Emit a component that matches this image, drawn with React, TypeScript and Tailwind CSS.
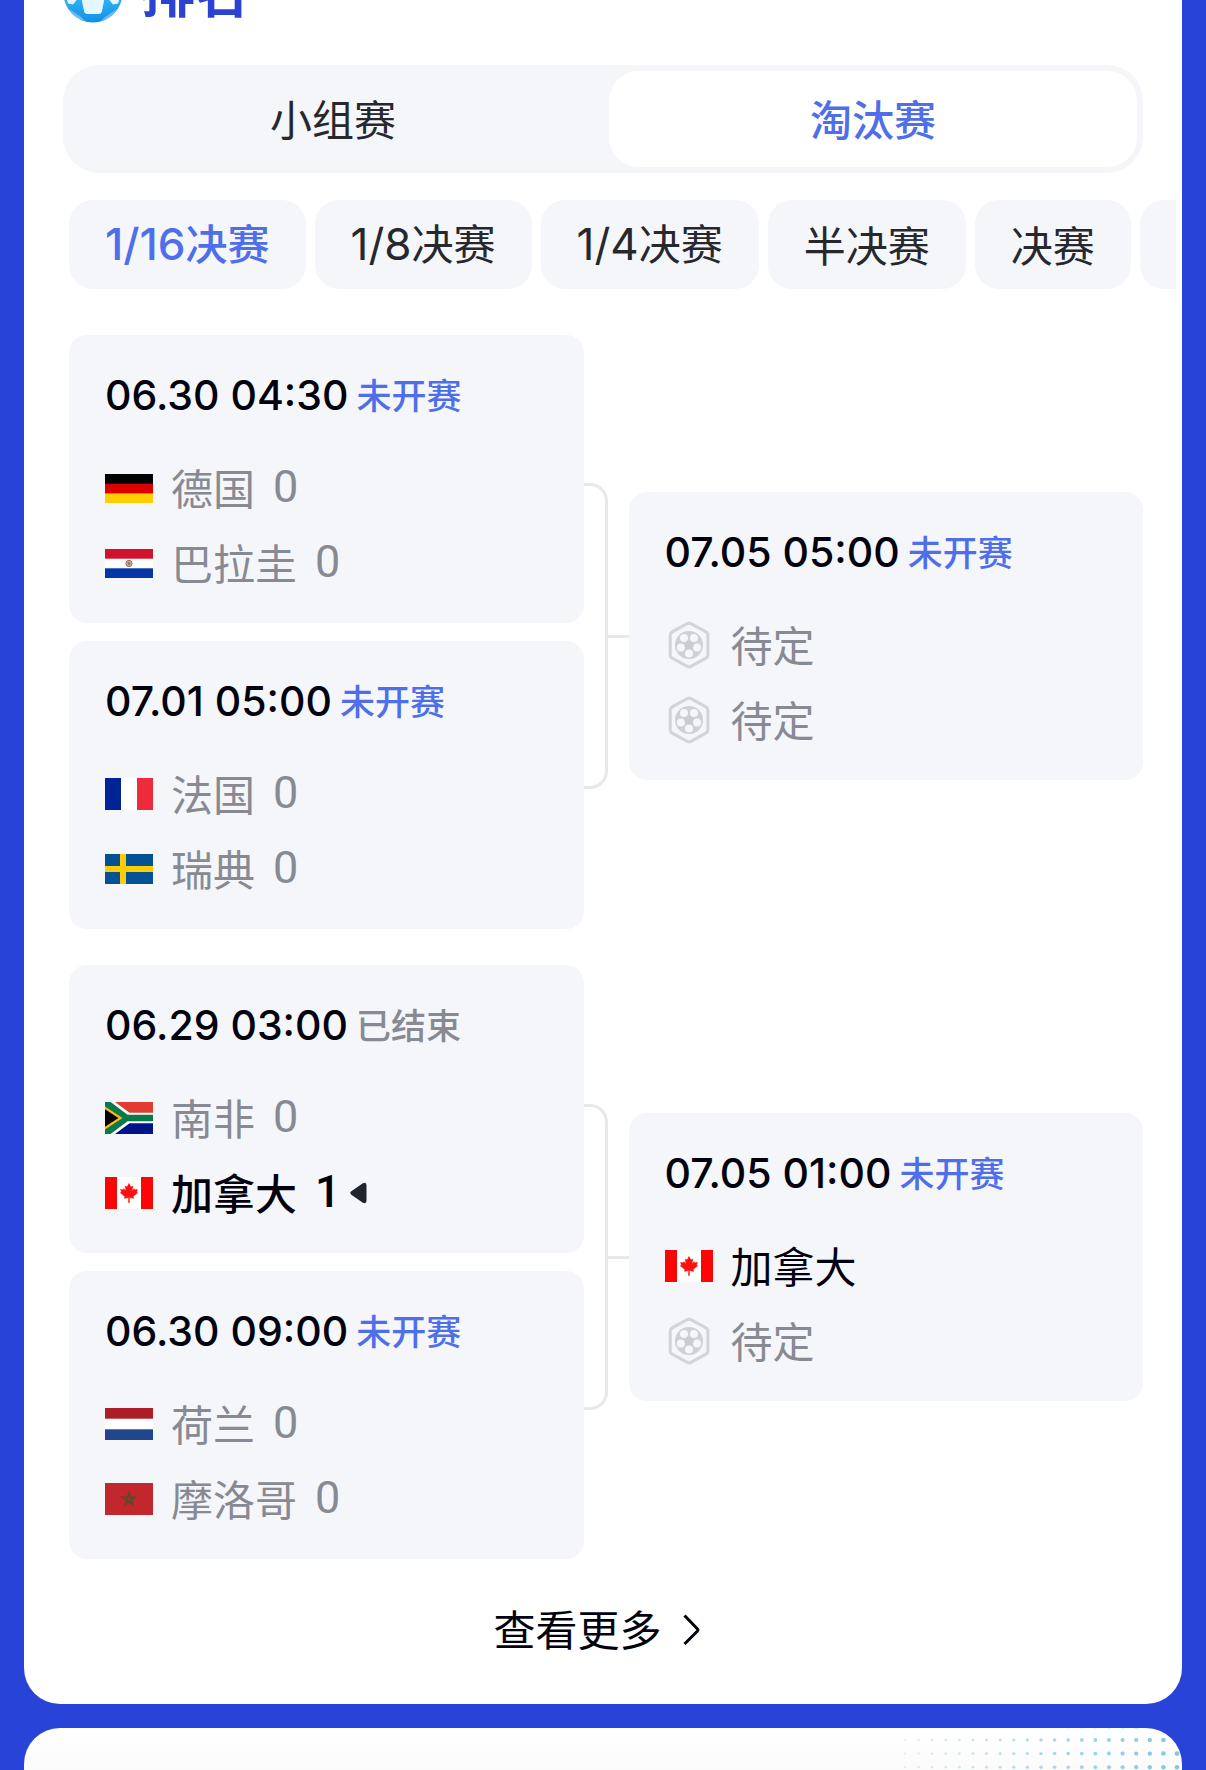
import { useState } from 'react'
import type { ReactNode } from 'react'

type TeamCode = 'de' | 'py' | 'fr' | 'se' | 'za' | 'ca' | 'nl' | 'ma' | 'tbd'

interface Team {
  code: TeamCode
  name: string
  score?: number
  winner?: boolean
  confirmed?: boolean
}

interface Match {
  time: string
  finished?: boolean
  teams: Team[]
}

const stages = ['小组赛', '淘汰赛']
const rounds = [
  { fraction: '1/16', name: '决赛' },
  { fraction: '1/8', name: '决赛' },
  { fraction: '1/4', name: '决赛' },
  { fraction: '', name: '半决赛' },
  { fraction: '', name: '决赛' },
]

const firstRound: Match[][] = [
  [
    {
      time: '06.30 04:30',
      teams: [
        { code: 'de', name: '德国', score: 0 },
        { code: 'py', name: '巴拉圭', score: 0 },
      ],
    },
    {
      time: '07.01 05:00',
      teams: [
        { code: 'fr', name: '法国', score: 0 },
        { code: 'se', name: '瑞典', score: 0 },
      ],
    },
  ],
  [
    {
      time: '06.29 03:00',
      finished: true,
      teams: [
        { code: 'za', name: '南非', score: 0 },
        { code: 'ca', name: '加拿大', score: 1, winner: true },
      ],
    },
    {
      time: '06.30 09:00',
      teams: [
        { code: 'nl', name: '荷兰', score: 0 },
        { code: 'ma', name: '摩洛哥', score: 0 },
      ],
    },
  ],
]

const secondRound: Match[] = [
  {
    time: '07.05 05:00',
    teams: [
      { code: 'tbd', name: '待定' },
      { code: 'tbd', name: '待定' },
    ],
  },
  {
    time: '07.05 01:00',
    teams: [
      { code: 'ca', name: '加拿大', confirmed: true },
      { code: 'tbd', name: '待定' },
    ],
  },
]

const flagHeights: Record<TeamCode, number> = {
  de: 29,
  py: 29,
  fr: 32,
  se: 30,
  za: 32,
  ca: 32,
  nl: 32,
  ma: 32,
  tbd: 48,
}

const flagShapes: Record<TeamCode, ReactNode> = {
  de: (
    <>
      <rect width="48" height="29" fill="#ffce05" />
      <rect width="48" height="19.4" fill="#dd0000" />
      <rect width="48" height="9.7" fill="#000" />
    </>
  ),
  py: (
    <>
      <rect width="48" height="29" fill="#fff" />
      <rect width="48" height="9.7" fill="#d0122d" />
      <rect y="19.3" width="48" height="9.7" fill="#0437a5" />
      <circle cx="24" cy="14.5" r="3.1" fill="#c9b2a4" stroke="#a3685c" strokeWidth="1" />
      <circle cx="24" cy="14.5" r="1.3" fill="#6c8064" />
    </>
  ),
  fr: (
    <>
      <rect width="48" height="32" fill="#fff" />
      <rect width="16" height="32" fill="#002395" />
      <rect x="32" width="16" height="32" fill="#ed2b3a" />
    </>
  ),
  se: (
    <>
      <rect width="48" height="30" fill="#055195" />
      <path d="M15 0h6v30h-6zM0 12h48v6H0z" fill="#fecc02" />
    </>
  ),
  za: (
    <>
      <rect width="48" height="16" fill="#e03c31" />
      <rect y="16" width="48" height="16" fill="#001489" />
      <path d="M0 0h10l14.5 10.7H48v10.6H24.5L10 32H0z" fill="#fff" />
      <path d="M0 0h5.6l17 12.8H48v6.4H22.6L5.6 32H0z" fill="#0a7a4a" />
      <path d="M0 4.5 17.5 16 0 27.5z" fill="#ffb81c" />
      <path d="M0 7.2 13.5 16 0 24.8z" fill="#000" />
    </>
  ),
  ca: (
    <>
      <rect width="48" height="32" fill="#fff" />
      <path d="M0 0h12v32H0zM36 0h12v32H36z" fill="#fb0505" />
      <path
        d="M24 6.500l-1.900 3.600-1.900-1 .9 5-2.300-2.400-.5 1.300-2.700-.5.9 2.700-1.200.6 4.700 3.800-.6 1.700 4.300-.7-.1 5h.8l-.1-5 4.300.7-.6-1.700 4.700-3.800-1.200-.6.9-2.700-2.700.5-.5-1.300-2.300 2.400.9-5-1.900 1z"
        fill="#fb1010"
        stroke="#fb1010"
        strokeWidth=".6"
      />
    </>
  ),
  nl: (
    <>
      <rect width="48" height="32" fill="#fff" />
      <rect width="48" height="10.7" fill="#ae1c28" />
      <rect y="21.3" width="48" height="10.7" fill="#21468b" />
    </>
  ),
  ma: (
    <>
      <rect width="48" height="32" fill="#c1272d" />
      <path
        d="M24 9.800l3.800 11.500-9.900-7.100h12.200l-9.900 7.100z"
        fill="none"
        stroke="#5d4a2c"
        strokeWidth="1.6"
      />
    </>
  ),
  tbd: (
    <>
      <path
        d="M22.200 2.600a4 4 0 0 1 3.700 0l15 8.300a4 4 0 0 1 2 3.500v19.200a4 4 0 0 1-2 3.500l-15 8.300a4 4 0 0 1-3.700 0l-15-8.300a4 4 0 0 1-2-3.500V14.400a4 4 0 0 1 2-3.500z"
        fill="none"
        stroke="#d3d4d7"
        strokeWidth="3"
      />
      <circle cx="24" cy="24" r="14" fill="#cfd0d3" />
      <g fill="#f4f6fa">
        <circle cx="24" cy="32.500" r="4" />
        <circle cx="15.900" cy="26.600" r="4" />
        <circle cx="19" cy="17.100" r="4" />
        <circle cx="29" cy="17.100" r="4" />
        <circle cx="32.100" cy="26.600" r="4" />
      </g>
      <path d="M24 18.800l5 3.600-1.900 5.900h-6.200l-1.900-5.900z" fill="#cbccd0" />
    </>
  ),
}

function Flag({ code }: { code: TeamCode }) {
  const height = flagHeights[code]
  return (
    <svg width="48" height={height} viewBox={`0 0 48 ${height}`} aria-hidden="true">
      {flagShapes[code]}
    </svg>
  )
}

function BallIcon() {
  return (
    <svg width="60" height="60" viewBox="0 0 60 60" aria-hidden="true">
      <defs>
        <linearGradient id="ball" x1="0" y1="0" x2="0" y2="1">
          <stop offset="0" stopColor="#4fd0fb" />
          <stop offset="0.6" stopColor="#2fb2f2" />
          <stop offset="1" stopColor="#128fe6" />
        </linearGradient>
        <clipPath id="ballClip">
          <circle cx="30" cy="30" r="29.500" />
        </clipPath>
      </defs>
      <circle cx="30" cy="30" r="29.500" fill="url(#ball)" />
      <g clipPath="url(#ballClip)" fill="#e4f7ff">
        <path d="M22 35h16q3 0 3 3l-2 10q-.5 3-3.500 3H24.500q-3 0-3.500-3l-2-10q0-3 3-3z" />
        <path d="M3 34l11 2.500-4 5-5-1z" />
        <path d="M57 34l-11 2.500 4 5 5-1z" />
        <path d="M30 10l11 8-4 12H23l-4-12z" />
        <path d="M6 46l12 8 6 6H8z" fill="#6cbcf2" />
        <path d="M54 46l-12 8-6 6h16z" fill="#6cbcf2" />
      </g>
    </svg>
  )
}

function TeamRow({ team }: { team: Team }) {
  const color = team.winner || team.confirmed ? 'text-[#02020f]' : 'text-[#878a92]'
  const weight = team.winner ? 'font-medium' : 'font-normal'

  return (
    <li className={`flex h-[60px] items-center ${color} ${weight}`}>
      <span className="flex w-12 justify-center">
        <Flag code={team.code} />
      </span>
      <span className="ml-[18px] pb-[3px] text-[42px] leading-[57px]">{team.name}</span>
      {team.score !== undefined && (
        <span className="ml-[18px] pb-[3px] font-['Roboto'] text-[45px] leading-[57px]">{team.score}</span>
      )}
      {team.winner && (
        <svg className="ml-[9px]" width="17" height="22" viewBox="0 0 17 22" aria-label="胜">
          <path d="M1.300 9.300 12.500 1.500Q16.500-.5 16.500 3.500v15q0 4-4 2L1.300 12.700q-2-1.700 0-3.400z" fill="#20242f" />
        </svg>
      )}
    </li>
  )
}

function MatchCard({ match }: { match: Match }) {
  return (
    <article className="rounded-[18px] bg-[#f4f6fa] px-9 pt-9 pb-[30px]">
      <div className="flex h-12 items-center gap-2 whitespace-nowrap">
        <time className="font-['Inter'] text-[41px] leading-[48px] font-medium text-[#02020f]">{match.time}</time>
        <span
          className={`pb-[3px] text-[35px] leading-[45px] font-medium ${
            match.finished ? 'text-[#878a92]' : 'text-[#4f6eea]'
          }`}
        >
          {match.finished ? '已结束' : '未开赛'}
        </span>
      </div>
      <ul className="mt-[39px] flex flex-col gap-[15px]">
        {match.teams.map((team, i) => (
          <TeamRow key={i} team={team} />
        ))}
      </ul>
    </article>
  )
}

// Bracket line joining two matches to the next round
function Connector() {
  return (
    <div className="flex h-[306px] items-center">
      <div className="h-full w-6 rounded-r-[18px] border-[3px] border-l-0 border-[#e8e8ea]" />
      <div className="h-[3px] flex-1 bg-[#e8e8ea]" />
    </div>
  )
}

function DotPattern() {
  const dots = []
  for (let row = 0; row < 4; row++) {
    for (let col = 0; col < 21; col++) {
      dots.push(
        <circle
          key={`${row}-${col}`}
          cx={4 + col * 13.6}
          cy={-1.6 + row * 13.6}
          r={1.1 + col * 0.06}
          fill="#7cc4e6"
          opacity={0.25 + col * 0.036}
        />
      )
    }
  }
  return (
    <svg className="absolute top-0 right-0" width="281" height="42" viewBox="0 0 281 42" aria-hidden="true">
      {dots}
    </svg>
  )
}

export default function App() {
  const [stage, setStage] = useState(1)
  const [round, setRound] = useState(0)

  return (
    <main className="overflow-hidden bg-[#2843d8] px-6 font-['Noto_Sans_CJK_SC',sans-serif]" lang="zh-CN">
      <section className="-mt-[61px] rounded-[36px] bg-white pt-6 pb-[52px]">
        <header className="mx-[39px] flex h-[60px] items-center gap-[18px]">
          <BallIcon />
          <h2 className="pb-1.5 text-[54px] leading-[60px] font-bold text-[#2b43d0]">排名</h2>
        </header>

        <div className="mx-[39px] mt-[42px] grid grid-cols-2 gap-3 rounded-[36px] bg-[#f4f6fa] p-1.5" role="tablist">
          {stages.map((name, i) => (
            <button
              key={name}
              type="button"
              role="tab"
              aria-selected={stage === i}
              onClick={() => setStage(i)}
              className={`h-24 rounded-[30px] pb-[3px] text-[42px] leading-[57px] ${
                stage === i ? 'bg-white font-medium text-[#4f6eea]' : 'text-[#26282e]'
              }`}
            >
              {name}
            </button>
          ))}
        </div>

        <div className="mt-[27px] mr-1.5 ml-[45px] flex gap-[9px] overflow-hidden">
          {rounds.map((item, i) => (
            <button
              key={item.fraction + item.name}
              type="button"
              aria-pressed={round === i}
              onClick={() => setRound(i)}
              className={`h-[89px] shrink-0 rounded-[24px] bg-[#f4f6fa] px-9 pb-[3px] text-[42px] leading-[57px] whitespace-nowrap ${
                round === i ? 'font-medium text-[#4f6eea]' : 'text-[#26282e]'
              }`}
            >
              {item.fraction && <span className="font-['Inter'] text-[44px]">{item.fraction}</span>}
              {item.name}
            </button>
          ))}
          <span className="h-[89px] w-40 shrink-0 rounded-[24px] bg-[#f4f6fa]" />
        </div>

        <div className="mt-[46px] mr-[39px] ml-[45px] grid grid-cols-[1fr_45px_1fr]">
          <div className="flex flex-col gap-9">
            {firstRound.map((pair, i) => (
              <div key={i} className="flex flex-col gap-[18px]">
                {pair.map((match) => (
                  <MatchCard key={match.time} match={match} />
                ))}
              </div>
            ))}
          </div>
          <div className="flex flex-col justify-between pt-[148px] pb-[149px]">
            <Connector />
            <Connector />
          </div>
          <div className="flex flex-col justify-between pt-[157px] pb-[158px]">
            {secondRound.map((match) => (
              <MatchCard key={match.time} match={match} />
            ))}
          </div>
        </div>

        <a
          href="#more"
          className="mt-[45px] flex h-12 items-center justify-center gap-1.5 pl-[3px] text-[42px] leading-[48px] text-[#02020f]"
        >
          查看更多
          <svg width="48" height="48" viewBox="0 0 48 48" fill="none" stroke="currentColor" strokeWidth="3" aria-hidden="true">
            <path d="M16.500 11.500 29.500 25a1.500 1.500 0 0 1 0 2L16.500 40" />
          </svg>
        </a>
      </section>

      <section className="relative mt-6 h-[42px] overflow-hidden rounded-t-[36px] bg-linear-to-b from-white to-[#fbfbfb]">
        <DotPattern />
      </section>
    </main>
  )
}
